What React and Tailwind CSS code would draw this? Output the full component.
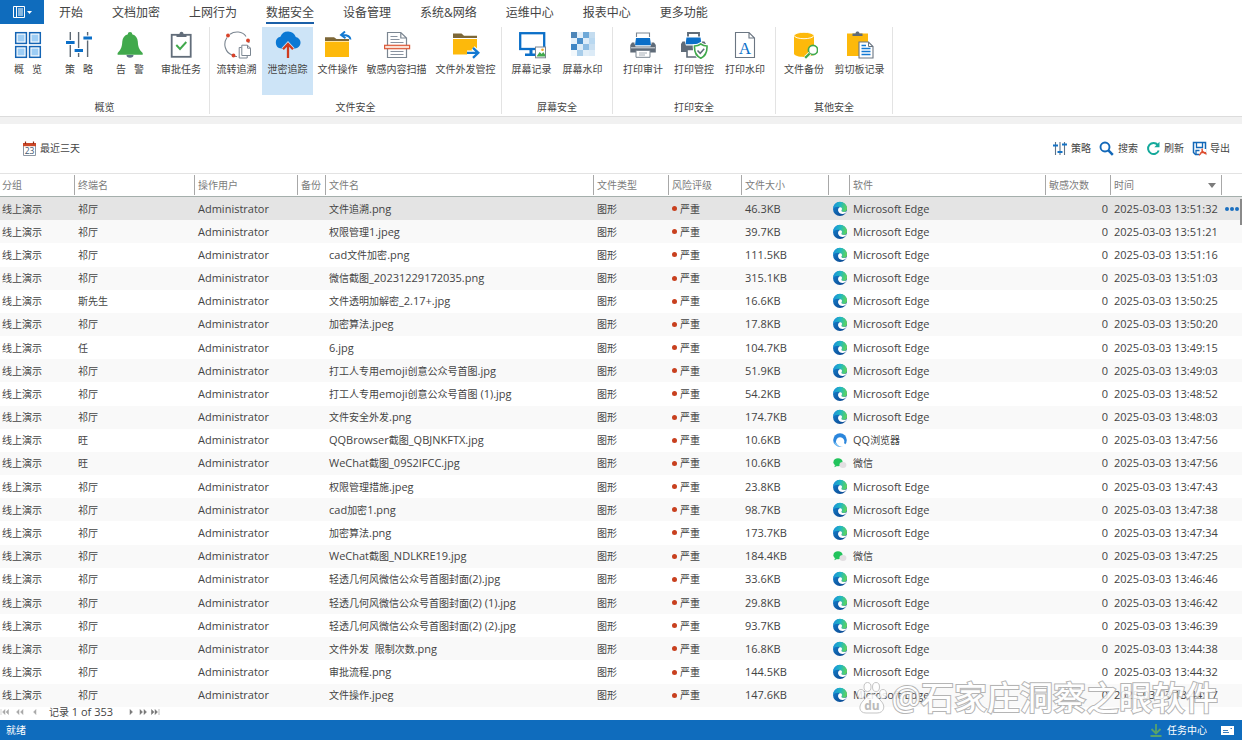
import React, { useState } from "react";
import clsx from "clsx";

const tabs = ["开始", "文档加密", "上网行为", "数据安全", "设备管理", "系统&网络", "运维中心", "报表中心", "更多功能"];

/* ---------- Ribbon icons (28x28) ---------- */

const Icon = ({ children }) => (
  <svg viewBox="0 0 28 28" className="h-7 w-7 shrink-0" fill="none" aria-hidden="true">{children}</svg>
);

const OverviewIcon = () => (
  <Icon>
    {[[1.7, 1.7], [15.6, 1.7], [1.7, 15.6], [15.6, 15.6]].map(([x, y]) => (
      <g key={`${x}-${y}`}>
        <rect x={x} y={y} width="10.7" height="10.7" fill="#fff" stroke="#1464b4" strokeWidth="1.5" />
        <rect x={x + 1.9} y={y + 1.9} width="6.9" height="6.9" fill="#9dcdf5" />
      </g>
    ))}
  </Icon>
);

const PolicyIcon = () => (
  <Icon>
    <path d="M5.3 1v25M13.6 1v25M22.6 1v25" stroke="#5d6873" strokeWidth="1.4" />
    <path d="M1 11.5h8.6M9.6 19.5h8.4M18.4 7h8.6" stroke="#fff" strokeWidth="5" />
    <path d="M1 11.5h8.6M9.6 19.5h8.4M18.4 7h8.6" stroke="#0b6fc8" strokeWidth="3" />
  </Icon>
);

const AlarmIcon = () => (
  <Icon>
    <path d="M10.5 24h7a3.5 2.8 0 0 1-7 0z" fill="#5d7285" />
    <path d="M14 1c1.500 0 2.200.9 2.200 2.200 3.600 1 5.300 3.600 5.600 7.300.3 4.500.7 7.500 4.900 11.500v1.800H1.600V22c4-4 4.400-7 4.700-11.500.3-3.700 2-6.300 5.600-7.300C11.900 1.900 12.600 1 14 1z" fill="#41a94c" />
  </Icon>
);

const TaskIcon = () => (
  <Icon>
    <rect x="4.700" y="3.800" width="19" height="22" stroke="#626d7a" strokeWidth="1.800" />
    <path d="M9.500 6V3h3c0-3 4-3 4 0h3v3z" fill="#626d7a" />
    <path d="M9.300 14l3.700 4 6.300-7" stroke="#41a94c" strokeWidth="1.900" />
  </Icon>
);

const TraceIcon = () => (
  <Icon>
    <path d="M7 3.300C11.500-.2 19.500 0 23 5.500M25 8.500c.6 1.200.9 2.200 1 3.500M4 6.500C-.5 13 2.500 21.500 9 24M12 25.500h2" stroke="#7b8691" strokeWidth="1.100" />
    <circle cx="5" cy="4.500" r="1.900" fill="#d8432a" />
    <circle cx="25" cy="9.500" r="1.900" fill="#d8432a" />
    <circle cx="10.500" cy="24.500" r="1.900" fill="#d8432a" />
    <path d="M18.500 16.500h-2.300V27h8v-2.300" fill="#fff" stroke="#7b8691" />
    <path d="M18.800 14.200h5.700l3 3v7.300h-8.700zM24.500 14.200v3h3" fill="#fff" stroke="#7b8691" />
  </Icon>
);

const LeakIcon = () => (
  <Icon>
    <path d="M7.200 17.500a6 6 0 0 1-.8-11.800A8.200 8.200 0 0 1 21.800 6a5.800 5.800 0 0 1-.8 11.500z" fill="#0a78d4" />
    <path d="M14 27V14M9 18.300l5-5.300 5 5.300" stroke="#cde4f7" strokeWidth="4" />
    <path d="M14 27V14M9 18.300l5-5.300 5 5.300" stroke="#cf3b1f" strokeWidth="2.300" />
  </Icon>
);

const FileOpIcon = () => (
  <Icon>
    <path d="M1 10V6.200h9l2.500 1.900H25V10z" fill="#7d6737" />
    <path d="M1 10.600h24V26H1z" fill="#fdb90b" />
    <path d="M21 .5L17 4l4.500 3.200M17.500 4c5-.2 8.600.4 9 4.500" stroke="#1379d2" strokeWidth="1.900" />
  </Icon>
);

const ScanIcon = () => (
  <Icon>
    <path d="M4.500 1.500h13.300L23.500 7v19.500h-19zM17.800 1.500V7h5.700" fill="#fff" stroke="#7b8691" strokeWidth="1.200" />
    <path d="M7.500 5.500h7M7.500 8.500h9M7.500 11.500h13M7.500 20.500h13M7.500 23.500h13" stroke="#8993a0" strokeWidth="1.100" />
    <rect x="1.600" y="14.300" width="25" height="3.400" fill="#fbe0d4" stroke="#dc5a3a" strokeWidth="1.200" />
  </Icon>
);

const FileOutIcon = () => (
  <Icon>
    <path d="M1 7V2.500h8.500L12 4.800h13V7z" fill="#7d6737" />
    <path d="M1 8h24v15.500H1z" fill="#fdb90b" />
    <path d="M15 21.800h11M21 16.800l5.300 5-5.300 5" stroke="#fff" strokeWidth="4.500" />
    <path d="M15 21.800h11M21 16.800l5.300 5-5.300 5" stroke="#1379d2" strokeWidth="2.300" />
  </Icon>
);

const ScreenIcon = () => (
  <Icon>
    <rect x="2.200" y="2.200" width="24" height="15.800" stroke="#0b6fc8" strokeWidth="2.300" />
    <path d="M11.500 18h3v4.500H18V25H7v-2.500h4.500z" fill="#0b6fc8" />
    <rect x="17.500" y="16" width="10" height="10.800" fill="#fff" stroke="#7b8691" />
    <path d="M18.500 25.500l3.200-4.500 2 2 1.500-2 1.800 2.500v2z" fill="#41a94c" />
    <circle cx="24.500" cy="18.800" r="1.300" fill="#f5a623" />
  </Icon>
);

const ScreenMarkIcon = () => (
  <Icon>
    {[[0, 0, "#4e86b8"], [2, 0, "#6fa9d8"], [1, 1, "#4a8fcb"], [3, 1, "#b9d8f0"], [0, 2, "#3f86c4"], [2, 2, "#8dbce3"], [1, 3, "#a8cdea"], [3, 3, "#dcebf7"], [1, 0, "#e3eff9"], [0, 1, "#e6f1fa"], [3, 0, "#c4dcef"], [2, 1, "#deecf8"], [1, 2, "#dcebf7"], [3, 2, "#c9dff1"], [0, 3, "#f2f8fc"], [2, 3, "#e1eef8"]].map(([c, r, fill]) => (
      <rect key={`${c}${r}`} x={2 + c * 6} y={1 + r * 6} width="6" height="6" fill={fill} />
    ))}
  </Icon>
);

const PrintAuditIcon = () => (
  <Icon>
    <path d="M7.500 10V2h13v8" fill="#fff" stroke="#7b8691" strokeWidth="1.100" />
    <path d="M3 11.500h22l1.800 2.500v7.500h-25.500V14z" fill="#5f6b78" />
    <path d="M5.500 6h17v6.500l-1 3h-15l-1-3z" fill="#fff" />
    <path d="M7 7h14l1 7.300H6z" fill="#0b6fc8" />
    <path d="M2 16.800h24" stroke="#fff" strokeWidth=".8" />
    <path d="M7 19.500h14v6.800H7z" fill="#fff" stroke="#7b8691" />
    <path d="M10 22h8M10 24h6" stroke="#a5adb5" />
  </Icon>
);

const PrintControlIcon = () => (
  <Icon>
    <path d="M8 8V2h11v6" fill="#fff" stroke="#5f6b78" strokeWidth="1.900" />
    <path d="M2.500 10.500h22L26 13v8H1v-8z" fill="#5f6b78" />
    <path d="M5 5.500h17v6.500l-1 2.500H6L5 12z" fill="#fff" />
    <path d="M6.500 6.500h14l1 6.800h-16z" fill="#0b6fc8" />
    <path d="M7 18.500h9v7.500H7z" fill="#fff" stroke="#5f6b78" strokeWidth="1.600" />
    <path d="M20.800 13c2 1.500 4 2 6.200 2 .3 6-1.500 10-6.200 12.200C16 25 14.200 21 14.500 15c2.300 0 4.300-.5 6.300-2z" fill="#fff" stroke="#fff" strokeWidth="3.500" />
    <path d="M20.800 13c2 1.500 4 2 6.200 2 .3 6-1.500 10-6.200 12.200C16 25 14.200 21 14.500 15c2.300 0 4.300-.5 6.300-2z" fill="#fff" stroke="#41a94c" strokeWidth="1.600" />
    <path d="M17.500 19.500l2.700 2.800 4-4.500" stroke="#5f6b78" strokeWidth="1.500" />
  </Icon>
);

const PrintMarkIcon = () => (
  <Icon>
    <path d="M4.500 1.500h13.500l5.500 5.500v19.500h-19zM18 1.500V7h5.500" fill="#fff" stroke="#6b7682" strokeWidth="1.100" />
    <text x="14" y="22.500" textAnchor="middle" fontSize="17" fontFamily="Liberation Serif, serif" fill="#0b6fc8">A</text>
  </Icon>
);

const BackupIcon = () => (
  <Icon>
    <path d="M4 4v18.500c0 4.500 20 4.500 20 0V4z" fill="#fdb90b" />
    <ellipse cx="14" cy="4.500" rx="9.800" ry="3.200" fill="#fdb90b" stroke="#fff" strokeWidth=".9" />
    <circle cx="23" cy="19" r="4.600" fill="#fff" stroke="#41a94c" strokeWidth="1.700" />
    <path d="M20 22.500l-4.500 4.300" stroke="#fff" strokeWidth="4" />
    <path d="M19.700 22.500l-4.500 4.300" stroke="#41a94c" strokeWidth="2.300" />
  </Icon>
);

const ClipboardIcon = () => (
  <Icon>
    <path d="M1 2.500h21V25H1z" fill="#fdb90b" />
    <path d="M6.500 5V2.500h3c.3-2.600 3.700-2.600 4 0h3V5z" fill="#5f6b78" />
    <path d="M13 11h9.500l4.500 4.500V27H13z" fill="#fff" stroke="#6b7682" strokeWidth="1.100" />
    <path d="M22.500 11v4.500H27" stroke="#6b7682" />
    <path d="M15.500 14.500h4.500M15.500 17.500h9M15.500 20.500h9M15.500 23.500h9" stroke="#1379d2" strokeWidth="1.300" />
  </Icon>
);

const groups = [
  {
    name: "概览",
    width: "w-[210px]",
    items: [
      { label: "概   览", icon: OverviewIcon, width: "w-[51px]" },
      { label: "策   略", icon: PolicyIcon, width: "w-[51px]" },
      { label: "告   警", icon: AlarmIcon, width: "w-[51px]" },
      { label: "审批任务", icon: TaskIcon, width: "w-[51px]" },
    ],
  },
  {
    name: "文件安全",
    width: "w-[292px]",
    items: [
      { label: "流转追溯", icon: TraceIcon, width: "w-[51px]" },
      { label: "泄密追踪", icon: LeakIcon, width: "w-[51px]" },
      { label: "文件操作", icon: FileOpIcon, width: "w-[49px]" },
      { label: "敏感内容扫描", icon: ScanIcon, width: "w-[69px]" },
      { label: "文件外发管控", icon: FileOutIcon, width: "w-[69px]" },
    ],
  },
  {
    name: "屏幕安全",
    width: "w-[111px]",
    items: [
      { label: "屏幕记录", icon: ScreenIcon, width: "w-[51px]" },
      { label: "屏幕水印", icon: ScreenMarkIcon, width: "w-[51px]" },
    ],
  },
  {
    name: "打印安全",
    width: "w-[163px]",
    items: [
      { label: "打印审计", icon: PrintAuditIcon, width: "w-[51px]" },
      { label: "打印管控", icon: PrintControlIcon, width: "w-[51px]" },
      { label: "打印水印", icon: PrintMarkIcon, width: "w-[51px]" },
    ],
  },
  {
    name: "其他安全",
    width: "w-[117px]",
    items: [
      { label: "文件备份", icon: BackupIcon, width: "w-[51px]" },
      { label: "剪切板记录", icon: ClipboardIcon, width: "w-[60px]" },
    ],
  },
];

/* ---------- Software icons ---------- */

const EdgeIcon = () => (
  <svg viewBox="0 0 16 16" className="h-4 w-4" aria-hidden="true">
    <defs>
      <linearGradient id="edgeTop" x1="0" y1=".3" x2="1" y2=".5">
        <stop offset="0" stopColor="#1a8fdc" />
        <stop offset=".5" stopColor="#22b8c0" />
        <stop offset="1" stopColor="#5fd65a" />
      </linearGradient>
      <linearGradient id="edgeBase" x1="0" y1="0" x2=".7" y2="1">
        <stop offset="0" stopColor="#1787d4" />
        <stop offset="1" stopColor="#0b4a94" />
      </linearGradient>
    </defs>
    <circle cx="8" cy="8" r="7" fill="url(#edgeBase)" />
    <path d="M1 8a7 7 0 0 1 14-.5c0 2.200-1.500 3.400-3.400 3.400-1.600 0-2.400-.6-2.300-1.200.8-.9.700-3.700-2.300-3.900C4 5.600 2 6.500 1 8z" fill="url(#edgeTop)" />
    <path d="M9.600 9.300c-.5.900.5 1.700 2.200 1.700 1.300 0 2.300-.3 3.100-1-.7 2-2.600 3-4.700 2.900-2.800-.2-4.700-2.400-4-4.900.5-1.500 2-2 3-1.400 1 .7 1 1.900.4 2.700z" fill="#fff" />
  </svg>
);

const QQIcon = () => (
  <svg viewBox="0 0 16 16" className="h-4 w-4" aria-hidden="true">
    <circle cx="8" cy="8" r="6.800" fill="#2b86dc" />
    <path d="M4.500 11.500a4.200 4.200 0 1 1 7.600-.5l2 2.500c-3 2-7.500 2-9.600-2z" fill="#fff" />
    <path d="M2 10.500c1 3 4 4.600 7 4.200-2.500-.6-4-2-4.600-4z" fill="#7cc2f5" />
  </svg>
);

const WechatIcon = () => (
  <svg viewBox="0 0 16 16" className="h-4 w-4" aria-hidden="true">
    <ellipse cx="6" cy="7.200" rx="4.600" ry="4" fill="#22c45c" />
    <path d="M3 10l-.6 2.300L5 11z" fill="#22c45c" />
    <ellipse cx="10.900" cy="9.900" rx="3.500" ry="3" fill="#e3dfe2" />
  </svg>
);

const software = {
  edge: { name: "Microsoft Edge", icon: EdgeIcon },
  qq: { name: "QQ浏览器", icon: QQIcon },
  wechat: { name: "微信", icon: WechatIcon },
};

const rows = [
  ["祁厅", "文件追溯.png", "46.3KB", "edge", "13:51:32"],
  ["祁厅", "权限管理1.jpeg", "39.7KB", "edge", "13:51:21"],
  ["祁厅", "cad文件加密.png", "111.5KB", "edge", "13:51:16"],
  ["祁厅", "微信截图_20231229172035.png", "315.1KB", "edge", "13:51:03"],
  ["斯先生", "文件透明加解密_2.17+.jpg", "16.6KB", "edge", "13:50:25"],
  ["祁厅", "加密算法.jpeg", "17.8KB", "edge", "13:50:20"],
  ["任", "6.jpg", "104.7KB", "edge", "13:49:15"],
  ["祁厅", "打工人专用emoji创意公众号首图.jpg", "51.9KB", "edge", "13:49:03"],
  ["祁厅", "打工人专用emoji创意公众号首图 (1).jpg", "54.2KB", "edge", "13:48:52"],
  ["祁厅", "文件安全外发.png", "174.7KB", "edge", "13:48:03"],
  ["旺", "QQBrowser截图_QBJNKFTX.jpg", "10.6KB", "qq", "13:47:56"],
  ["旺", "WeChat截图_09S2IFCC.jpg", "10.6KB", "wechat", "13:47:56"],
  ["祁厅", "权限管理措施.jpeg", "23.8KB", "edge", "13:47:43"],
  ["祁厅", "cad加密1.png", "98.7KB", "edge", "13:47:38"],
  ["祁厅", "加密算法.png", "173.7KB", "edge", "13:47:34"],
  ["祁厅", "WeChat截图_NDLKRE19.jpg", "184.4KB", "wechat", "13:47:25"],
  ["祁厅", "轻透几何风微信公众号首图封面(2).jpg", "33.6KB", "edge", "13:46:46"],
  ["祁厅", "轻透几何风微信公众号首图封面(2) (1).jpg", "29.8KB", "edge", "13:46:42"],
  ["祁厅", "轻透几何风微信公众号首图封面(2) (2).jpg", "93.7KB", "edge", "13:46:39"],
  ["祁厅", "文件外发  限制次数.png", "16.8KB", "edge", "13:44:38"],
  ["祁厅", "审批流程.png", "144.5KB", "edge", "13:44:32"],
  ["祁厅", "文件操作.jpeg", "147.6KB", "edge", "13:44:17"],
];

const columns = [
  { label: "分组", width: "w-[74px]" },
  { label: "终端名", width: "w-[120px]" },
  { label: "操作用户", width: "w-[103px]" },
  { label: "备份", width: "w-[28px]" },
  { label: "文件名", width: "" },
  { label: "文件类型", width: "w-[75px]" },
  { label: "风险评级", width: "w-[73px]" },
  { label: "文件大小", width: "w-[87px]" },
  { label: "", width: "w-[21px]" },
  { label: "软件", width: "w-[196px]" },
  { label: "敏感次数", width: "w-[65px]" },
  { label: "时间", width: "w-[111px]", sorted: true },
  { label: "", width: "w-[21px]" },
];

// Chinese runs are set one size smaller than the latin text beside them
const Mixed = ({ text }) =>
  text.split(/([\u4e00-\u9fff]+)/).map((part, i) => (
    <span key={i} className={i % 2 ? "text-[10px]" : "text-[11px]"}>{part}</span>
  ));

const RibbonButton = ({ item, active, onClick }) => (
  <button
    type="button"
    onClick={onClick}
    className={clsx("flex h-[68px] flex-col items-center pt-1 whitespace-pre", item.width, active ? "bg-[#cde4f7]" : "hover:bg-[#e5f1fb]")}
  >
    <item.icon />
    <span className="mt-0.5 leading-4">{item.label}</span>
  </button>
);

const pagerIcons = {
  首页: "M1 1v6M5 1.500v5L2.500 4zM8.500 1.500v5L6 4z",
  上一屏: "M4 1.500v5L1.500 4zM8 1.500v5L5.500 4z",
  上一条: "M6 1.500v5L3.500 4z",
  下一条: "M4 1.500v5L6.500 4z",
  下一屏: "M2 1.500v5L4.500 4zM6 1.500v5L8.500 4z",
  末页: "M1.500 1.500v5L4 4zM5 1.500v5L7.500 4zM9 1v6",
};

const PagerButton = ({ name, dim }) => (
  <button type="button" aria-label={name} className={dim ? "text-[#a8a8a8]" : "text-[#777777]"}>
    <svg viewBox="0 0 10 8" className="h-2 w-2.5" fill="currentColor" stroke="currentColor" strokeWidth=".5" aria-hidden="true">
      <path d={pagerIcons[name]} />
    </svg>
  </button>
);

const Toolbar = () => (
  <div className="flex h-[49px] items-center justify-between pr-3 pl-[22px]">
    <button type="button" className="flex items-center gap-[3px]">
      <svg viewBox="0 0 15 15" className="h-[15px] w-[15px]" aria-hidden="true">
        <path d="M1.500 2.500h12v12h-12z" fill="#fff" stroke="#8d97a3" />
        <path d="M1 2h13v3.200H1z" fill="#cb4727" />
        <path d="M3.500 .5v2.500M11.500 .5v2.500" stroke="#8c2d18" strokeWidth="1.200" />
        <text x="7.500" y="13.200" textAnchor="middle" fontSize="8.500" fontFamily="Open Sans, sans-serif" fill="#3f566e">23</text>
      </svg>
      最近三天
    </button>
    <div className="flex items-center gap-2">
      <button type="button" className="flex items-center gap-1">
        <svg viewBox="0 0 15 15" className="h-[15px] w-[15px]" fill="none" aria-hidden="true">
          <path d="M3.500 1v13M8 1v13M12.500 1v13" stroke="#5f7387" strokeWidth="1.100" />
          <path d="M1 4.500h5M5.500 11h5M10 3.500h5" stroke="#1473c6" strokeWidth="2" />
        </svg>
        策略
      </button>
      <button type="button" className="flex items-center gap-1">
        <svg viewBox="0 0 15 15" className="h-[15px] w-[15px]" fill="none" stroke="#1368b8" aria-hidden="true">
          <circle cx="6" cy="6" r="4.500" strokeWidth="1.900" />
          <path d="M9.200 9.200l4.600 4.600" strokeWidth="2.500" />
        </svg>
        搜索
      </button>
      <button type="button" className="flex items-center gap-[3px]">
        <svg viewBox="0 0 15 15" className="h-[15px] w-[15px]" fill="none" aria-hidden="true">
          <path d="M11.800 4A5.500 5.500 0 1 0 12.700 9.500" stroke="#14a99b" strokeWidth="2" />
          <path d="M13.500 .8v5.400H8.300z" fill="#14a99b" />
        </svg>
        刷新
      </button>
      <button type="button" className="flex items-center gap-[3px]">
        <svg viewBox="0 0 15 15" className="h-[15px] w-[15px]" fill="none" aria-hidden="true">
          <path d="M1.500 1.500h12v12h-10l-2-2z" fill="#fff" stroke="#1368b8" strokeWidth="1.500" />
          <path d="M4.500 2v4.500h6V2M4 13.500V9.500h4" stroke="#1368b8" strokeWidth="1.300" />
          <path d="M7.500 8h7v7h-7z" fill="#fff" />
          <path d="M7 14.200c2.500-1.500 3.500-4 3.200-6.500M10 8c0 2.500 1.500 4.200 4.500 5M8 12c2-.6 4-.8 6-.3" stroke="#dd4b2c" strokeWidth="1.300" />
        </svg>
        导出
      </button>
    </div>
  </div>
);

const cell = "truncate border-l border-transparent py-0 pl-[3px] text-left font-normal";

const LogTable = () => (
  <table className="w-full table-fixed border-separate border-spacing-0 leading-4">
    <thead>
      <tr className="h-6 text-[#7c7c7c]">
        {columns.map((col, i) => (
          <th key={i} scope="col" className={clsx("border-t border-b border-t-[#e3e3e3] border-b-[#a5afac] p-0 py-px text-left font-normal whitespace-nowrap", col.width)}>
            <div className={clsx("flex h-5 items-center justify-between", i > 0 ? "border-l border-[#a8a8a8] pl-[3px]" : "pl-0.5")}>
              {col.label}
              {col.sorted && (
                <svg viewBox="0 0 8 5" className="mr-[5px] h-[5px] w-2" fill="#7c7c7c" aria-hidden="true"><path d="M0 0h8L4 5z" /></svg>
              )}
            </div>
          </th>
        ))}
      </tr>
    </thead>
    <tbody>
      {rows.map(([terminal, file, size, app, time], i) => {
        const { name, icon: AppIcon } = software[app];
        return (
          <tr key={i} className={i === 0 ? "bg-[#e4e4e4]" : i % 2 ? "bg-[#f9f9f9]" : "bg-white"}>
            <td className="truncate p-0 pl-0.5">线上演示</td>
            <td className={cell}>{terminal}</td>
            <td className={cell}><Mixed text="Administrator" /></td>
            <td className={cell}></td>
            <td className={clsx(cell, "whitespace-pre")}><Mixed text={file} /></td>
            <td className={cell}>图形</td>
            <td className={cell}>
              <span className="flex items-center gap-[3px]">
                <span className="h-[5px] w-[5px] rounded-full bg-[#c8401f]" />
                严重
              </span>
            </td>
            <td className={cell}><Mixed text={size} /></td>
            <td className={cell}><AppIcon /></td>
            <td className={cell}><Mixed text={name} /></td>
            <td className="p-0 pr-[2px] text-right text-[11px]">0</td>
            <td className="p-0 pl-1 text-[11px] whitespace-nowrap">2025-03-03 {time}</td>
            <td className="p-0 pl-1">
              {i === 0 && (
                <button type="button" aria-label="更多" className="flex gap-px">
                  <span className="h-1 w-1 rounded-full bg-[#1a6fc0]" />
                  <span className="h-1 w-1 rounded-full bg-[#1a6fc0]" />
                  <span className="h-1 w-1 rounded-full bg-[#1a6fc0]" />
                </button>
              )}
            </td>
          </tr>
        );
      })}
    </tbody>
  </table>
);

const Watermark = () => (
  <div className="pointer-events-none absolute right-6 bottom-1 flex items-center gap-[3px] opacity-85">
    <svg viewBox="0 0 32 34" className="h-[34px] w-8" fill="#fff" stroke="#bdbdbd" aria-hidden="true">
      <ellipse cx="5" cy="13" rx="3.500" ry="4.500" />
      <ellipse cx="11.500" cy="6" rx="3.500" ry="4.500" />
      <ellipse cx="20" cy="6" rx="3.500" ry="4.500" />
      <ellipse cx="27" cy="13" rx="3.500" ry="4.500" />
      <path d="M16 13c4 0 6 4 9 7 5 5 3 12-4 12H10c-7 0-8-7-3-12 3-3 5-7 9-7z" />
      <text x="16" y="29" textAnchor="middle" fontSize="12" fontWeight="bold" fontFamily="Open Sans, sans-serif" fill="#b0b0b0" stroke="none">du</text>
    </svg>
    <span className="text-[33px] leading-[36px] font-medium text-white [-webkit-text-stroke:2px_#a9a9a9] [paint-order:stroke_fill]">@石家庄洞察之眼软件</span>
  </div>
);

export default function App() {
  const [tab, setTab] = useState("数据安全");
  const [tool, setTool] = useState("泄密追踪");

  return (
    <div className="flex min-h-screen flex-col bg-white font-['Open_Sans','Noto_Sans_CJK_SC',sans-serif] text-[10px] text-[#444444]">
      <header>
        <nav className="flex h-6 items-start text-[12px]">
          <button type="button" aria-label="菜单" className="flex h-6 w-11 items-center justify-center gap-0.5 bg-[#0f6cbd]">
            <svg viewBox="0 0 12 12" className="h-3 w-3" fill="none" stroke="#fff" aria-hidden="true">
              <path d="M.5.5h11v11H.5zM3.500.5v11M5 3h5M5 5h5M5 7h5M5 9h5" />
            </svg>
            <svg viewBox="0 0 5 3" className="h-[3px] w-[5px]" fill="#fff" aria-hidden="true"><path d="M0 0h5L2.500 3z" /></svg>
          </button>
          <div className="ml-[15px] flex gap-[29px]">
            {tabs.map((name) => (
              <button
                key={name}
                type="button"
                onClick={() => setTab(name)}
                className={clsx("h-6 border-b-2 pt-1 leading-[18px]", tab === name ? "border-[#1a5fa8]" : "border-transparent")}
              >
                {name}
              </button>
            ))}
          </div>
        </nav>

        <div className="flex pt-[3px]">
          {groups.map((group) => (
            <section key={group.name} className={clsx("mb-[2px] flex shrink-0 flex-col items-center border-r border-[#e3e3e3]", group.width)}>
              <div className="flex">
                {group.items.map((item) => (
                  <RibbonButton key={item.label} item={item} active={tool === item.label} onClick={() => setTool(item.label)} />
                ))}
              </div>
              <h2 className="mt-[5px] leading-[14px]">{group.name}</h2>
            </section>
          ))}
        </div>
        <div className="h-2 border-t border-[#dcdcdc] bg-[#f1f1f1]" />
      </header>

      <Toolbar />

      <main className="relative flex grow flex-col">
        <div className="relative flex grow">
          <LogTable />
          <div className="absolute top-[26px] right-0 h-[26px] w-0.5 bg-[#8a8a8a]" />
        </div>
        <div className="flex h-[13px] items-center gap-[5px] pb-1">
          <PagerButton name="首页" dim />
          <PagerButton name="上一屏" dim />
          <PagerButton name="上一条" dim />
          <span className="ml-1 leading-[13px] whitespace-nowrap"><Mixed text="记录 1 of 353" /></span>
          <div className="ml-2 flex items-center gap-[2px]">
            <PagerButton name="下一条" />
            <PagerButton name="下一屏" />
            <PagerButton name="末页" />
          </div>
        </div>
        <Watermark />
      </main>

      <footer className="flex h-5 items-center justify-between bg-[#0f6cbd] pr-2 pl-[6px] text-white">
        <span>就绪</span>
        <div className="flex items-center gap-[14px]">
          <button type="button" className="flex items-center gap-1">
            <svg viewBox="0 0 14 14" className="h-[14px] w-[14px]" fill="none" stroke="#58a36b" strokeWidth="1.800" aria-hidden="true">
              <path d="M7 1v9M2.500 6L7 10.500 11.500 6M1.500 13h11" />
            </svg>
            任务中心
          </button>
          <button type="button" aria-label="消息">
            <svg viewBox="0 0 13 9" className="h-[9px] w-[13px]" aria-hidden="true">
              <path d="M0 0h13v9H0z" fill="#fff" />
              <path d="M2 4.500h5M2 6.500h6M9.500 2.500h1.500" stroke="#3a7dbd" />
            </svg>
          </button>
        </div>
      </footer>
    </div>
  );
}
